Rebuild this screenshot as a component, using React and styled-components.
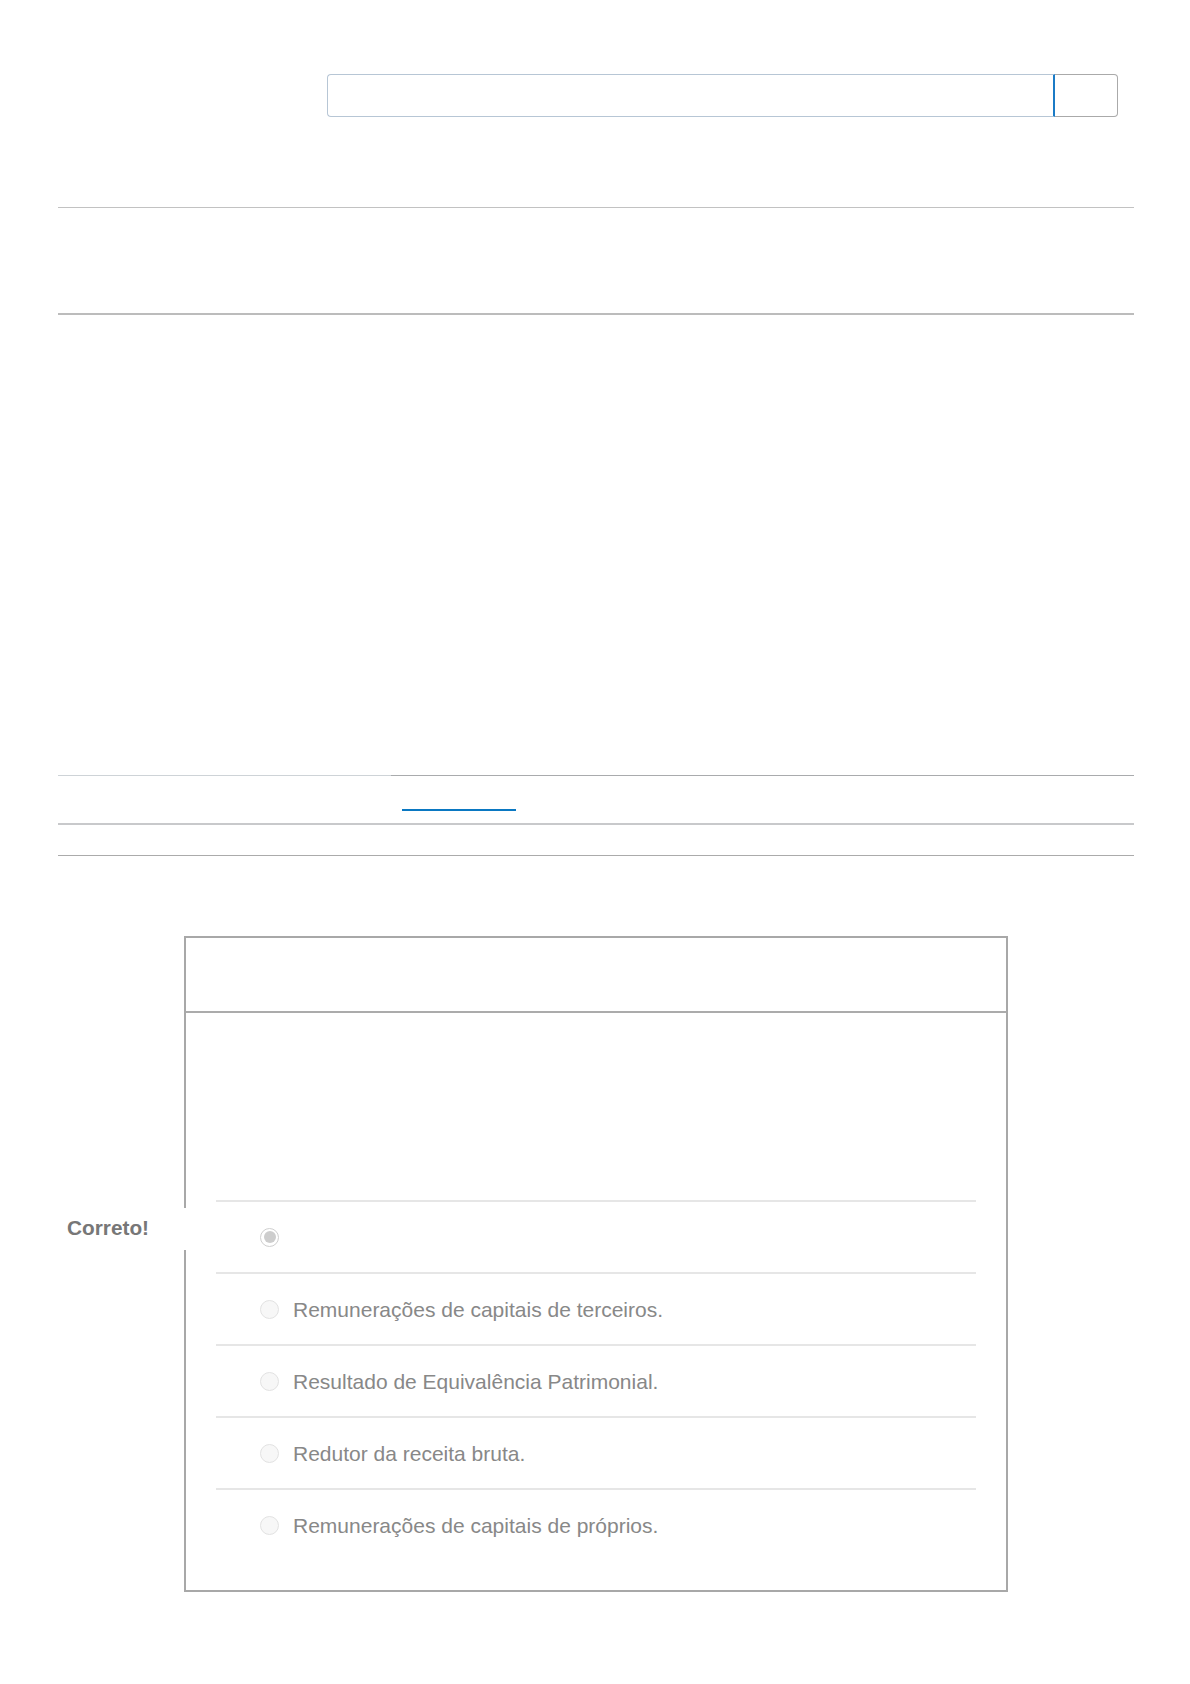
import React from 'react'
import styled, { createGlobalStyle } from 'styled-components'

const GlobalStyle = createGlobalStyle`
  html, body {
    margin: 0;
    padding: 0;
    background: #fff;
  }
  body {
    font-family: "Liberation Sans", Arial, sans-serif;
  }
`;

const Page = styled.div`
  padding: 0 56px 93px 58px;
`;

const SearchRow = styled.div`
  display: flex;
  padding: 74px 16px 0 269px;
`;

const SearchInput = styled.input`
  flex: 1;
  height: 43px;
  box-sizing: border-box;
  border: 1px solid #b7c6d5;
  border-right: 2px solid #1b7bc6;
  border-radius: 4px 0 0 4px;
  padding: 0 10px;
  font: inherit;
  &:focus {
    outline: none;
  }
`;

const SearchButton = styled.button`
  width: 63px;
  height: 43px;
  box-sizing: border-box;
  border: 1px solid #aaa;
  border-left: none;
  border-radius: 0 4px 4px 0;
  background: #fff;
`;

const Rule = styled.div`
  margin-top: ${p => p.gap}px;
  border-top: ${p => p.size || 1}px solid ${p => p.color || '#bbb'};
`;

const TabBar = styled.div`
  display: flex;
  margin-top: 460px;
  height: 48px;
  border-bottom: 2px solid #c8c9cb;
`;

const TabLead = styled.div`
  width: 333px;
  border-top: 1px solid #ced3d7;
`;

const TabList = styled.div`
  flex: 1;
  display: flex;
  padding-left: 11px;
  border-top: 1px solid #a9abad;
`;

const Tab = styled.div`
  width: 114px;
  height: 33px;
  border-bottom: 2px solid ${p => (p.active ? '#0a78c2' : 'transparent')};
`;

const Card = styled.div`
  position: relative;
  width: 824px;
  box-sizing: border-box;
  margin: 80px 0 0 126px;
  border: 2px solid #a8a8a8;
`;

const CardHeader = styled.div`
  height: 73px;
  border-bottom: 2px solid #ababab;
`;

const CardBody = styled.div`
  padding: 187px 30px 30px;
`;

const Feedback = styled.div`
  position: absolute;
  left: -129px;
  top: 270px;
  width: 121px;
  height: 42px;
  padding-left: 10px;
  background: #fff;
  color: #777;
  font-size: 20.8px;
  font-weight: bold;
  line-height: 40px;
`;

const Answer = styled.label`
  display: flex;
  align-items: center;
  gap: 14px;
  height: 70px;
  padding: 2px 0 0 44px;
  box-sizing: border-box;
  height: 72px;
  border-top: 2px solid #e6e6e6;
  color: #888;
  font-size: 21px;
`;

const Radio = styled.span`
  position: relative;
  width: 19px;
  height: 19px;
  box-sizing: border-box;
  border-radius: 50%;
  flex-shrink: 0;
  margin-top: -2px;
  border: 1px solid ${p => (p.checked ? '#cfcfcf' : '#e2e2e2')};
  background: ${p => (p.checked ? '#fff' : '#f7f7f7')};

  &::after {
    content: '';
    display: ${p => (p.checked ? 'block' : 'none')};
    position: absolute;
    inset: 2.5px;
    border-radius: 50%;
    background: #cdcdcd;
  }
`;

const answers = [
  { text: '', checked: true },
  { text: 'Remunerações de capitais de terceiros.' },
  { text: 'Resultado de Equivalência Patrimonial.' },
  { text: 'Redutor da receita bruta.' },
  { text: 'Remunerações de capitais de próprios.' },
];

export default function App() {
  return (
    <>
      <GlobalStyle />
      <Page>
        <SearchRow>
          <SearchInput type="text" aria-label="Pesquisar" />
          <SearchButton aria-label="Buscar" />
        </SearchRow>
        <Rule gap={90} color="#c2c2c2" />
        <Rule gap={105} size={2} color="#bcbcbc" />
        <TabBar>
          <TabLead />
          <TabList>
            <Tab active />
          </TabList>
        </TabBar>
        <Rule gap={30} color="#ababab" />
        <Card>
          <CardHeader />
          <Feedback>Correto!</Feedback>
          <CardBody>
            {answers.map((a, i) => (
              <Answer key={i}>
                <Radio checked={a.checked} />
                {a.text}
              </Answer>
            ))}
          </CardBody>
        </Card>
      </Page>
    </>
  )
}
